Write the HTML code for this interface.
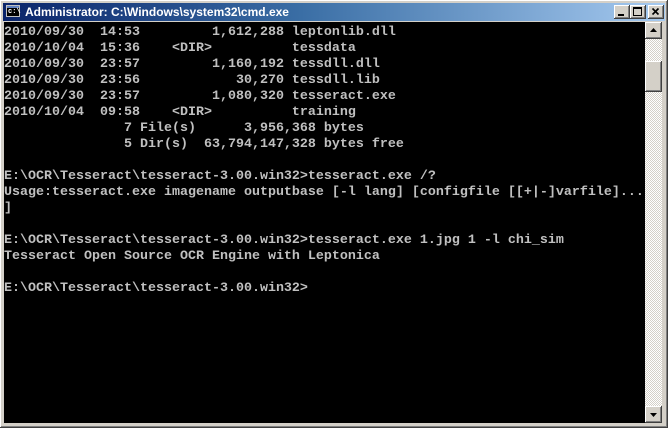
<!DOCTYPE html>
<html><head><style>
html,body{margin:0;padding:0;width:668px;height:428px;overflow:hidden;background:#d4d0c8;}
.win{position:absolute;left:0;top:0;width:668px;height:428px;background:#d4d0c8;box-shadow:inset -1px -1px #404040,inset 1px 1px #fff,inset -2px -2px #808080;}
.title{position:absolute;left:3px;top:3px;width:662px;height:18px;background:linear-gradient(to right,#0a246a,#3a6ea5 45%,#a6caf0);}
.title .t{position:absolute;left:22px;top:1px;color:#fff;font:bold 12px "Liberation Sans",sans-serif;line-height:16px;}
.icon{position:absolute;left:3px;top:2px;width:14px;height:12px;background:#000;border:1px solid #c0c0c0;box-sizing:border-box;}
.icon span{position:absolute;left:1px;top:3px;color:#fff;font:bold 7px "Liberation Mono",monospace;line-height:7px;}
.icon:before{content:"";position:absolute;left:0;top:0;right:0;height:2px;background:#6080c0;}
.btn{position:absolute;top:2px;width:16px;height:14px;background:#d4d0c8;box-shadow:inset -1px -1px #404040,inset 1px 1px #fff,inset -2px -2px #808080;}
.term{position:absolute;left:4px;top:22px;width:641px;height:401px;background:#000;overflow:hidden;}
pre{margin:0;position:absolute;left:0;top:3px;color:#c0c0c0;font:bold 13.33px "Liberation Mono",monospace;line-height:16px;letter-spacing:0;}
.sb{position:absolute;left:645px;top:22px;width:17px;height:401px;background:repeating-conic-gradient(#d4d0c8 0 25%,#fff 0 50%) 0 0/2px 2px;}
.sbtn{position:absolute;left:0;width:17px;height:17px;background:#d4d0c8;box-shadow:inset -1px -1px #404040,inset 1px 1px #fff,inset -2px -2px #808080;}
</style></head><body>
<div class="win">
<div class="title">
<div class="icon"><span>c:\</span></div>
<div class="t">Administrator: C:\Windows\system32\cmd.exe</div>
<div class="btn" style="left:611px"><div style="position:absolute;left:4px;top:9px;width:6px;height:2px;background:#000"></div></div>
<div class="btn" style="left:627px"><div style="position:absolute;left:3px;top:2px;width:7px;height:6px;border:1px solid #000;border-top-width:2px"></div></div>
<div class="btn" style="left:645px"><svg width="16" height="14" style="position:absolute;left:0;top:0"><path d="M4.5 3.5L10.5 9.5M10.5 3.5L4.5 9.5" stroke="#000" stroke-width="1.6"/></svg></div>
</div>
<div class="term"><pre>2010/09/30  14:53         1,612,288 leptonlib.dll
2010/10/04  15:36    &lt;DIR&gt;          tessdata
2010/09/30  23:57         1,160,192 tessdll.dll
2010/09/30  23:56            30,270 tessdll.lib
2010/09/30  23:57         1,080,320 tesseract.exe
2010/10/04  09:58    &lt;DIR&gt;          training
               7 File(s)      3,956,368 bytes
               5 Dir(s)  63,794,147,328 bytes free

E:\OCR\Tesseract\tesseract-3.00.win32&gt;tesseract.exe /?
Usage:tesseract.exe imagename outputbase [-l lang] [configfile [[+|-]varfile]...
]

E:\OCR\Tesseract\tesseract-3.00.win32&gt;tesseract.exe 1.jpg 1 -l chi_sim
Tesseract Open Source OCR Engine with Leptonica

E:\OCR\Tesseract\tesseract-3.00.win32&gt;</pre></div>
<div class="sb">
<div class="sbtn" style="top:0"><svg width="17" height="17"><path d="M5 10H12L8.5 6Z" fill="#000"/></svg></div>
<div class="sbtn" style="top:39px;height:31px"></div>
<div class="sbtn" style="top:384px"><svg width="17" height="17"><path d="M5 7H12L8.5 11Z" fill="#000"/></svg></div>
</div>
</div>
</body></html>
